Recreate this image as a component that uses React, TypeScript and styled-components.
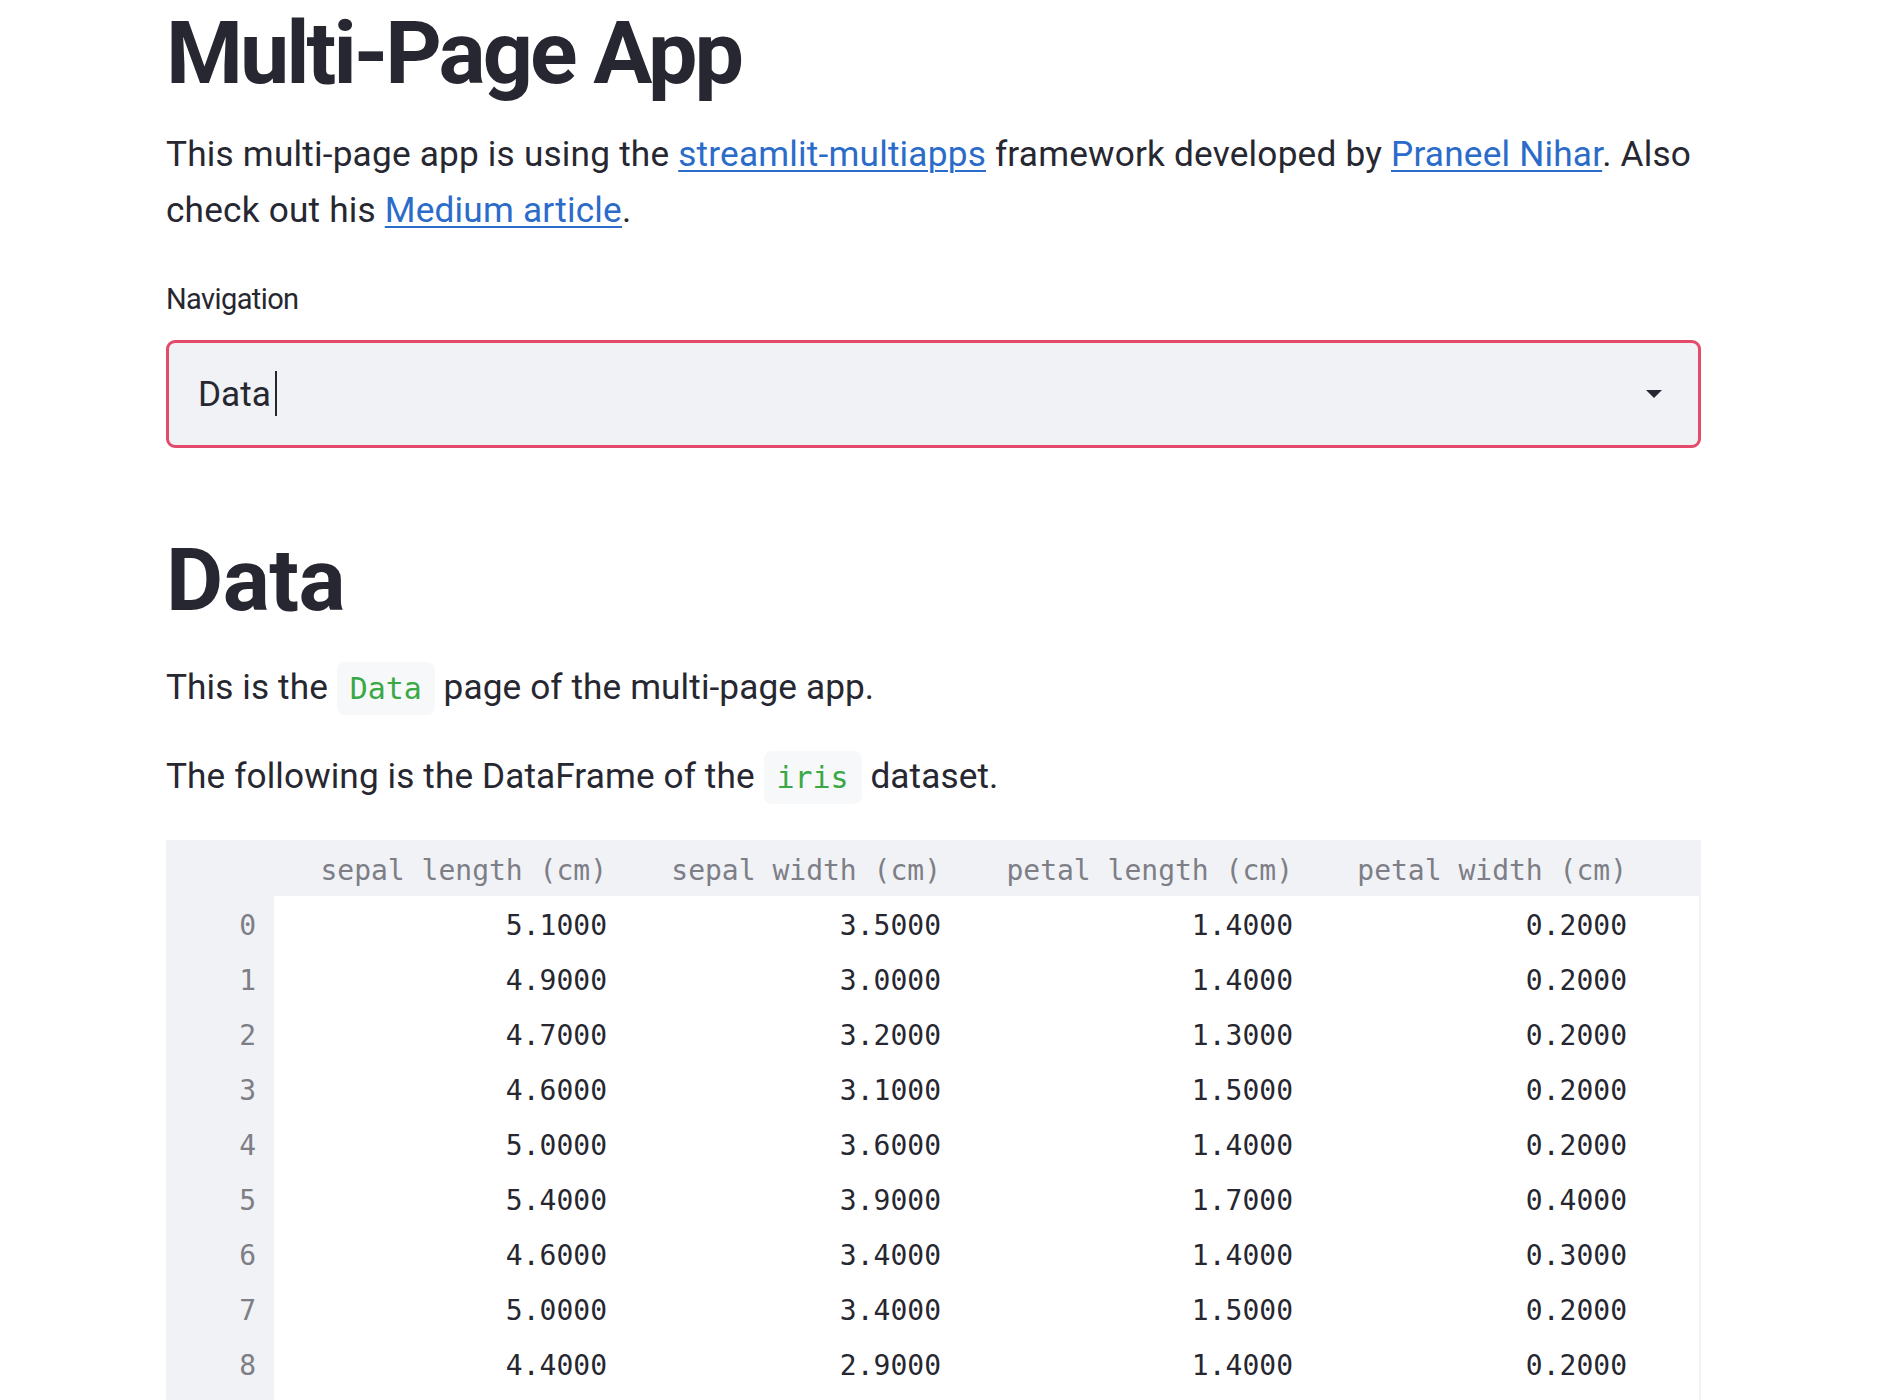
import styled, { createGlobalStyle } from 'styled-components';

const GlobalStyle = createGlobalStyle`
  html, body {
    margin: 0;
    padding: 0;
    background: #ffffff;
  }
  body {
    font-family: Roboto, "Noto Sans", sans-serif;
    color: #262730;
  }
`;

type Row = [number, number, number, number];

const columns = ['sepal length (cm)', 'sepal width (cm)', 'petal length (cm)', 'petal width (cm)'];

const iris: Row[] = [
  [5.1, 3.5, 1.4, 0.2],
  [4.9, 3.0, 1.4, 0.2],
  [4.7, 3.2, 1.3, 0.2],
  [4.6, 3.1, 1.5, 0.2],
  [5.0, 3.6, 1.4, 0.2],
  [5.4, 3.9, 1.7, 0.4],
  [4.6, 3.4, 1.4, 0.3],
  [5.0, 3.4, 1.5, 0.2],
  [4.4, 2.9, 1.4, 0.2],
  [4.9, 3.1, 1.5, 0.1],
];

export default function App() {
  return (
    <>
      <GlobalStyle />
      <AppView>
        <Main>
          <Title>Multi-Page App</Title>
          <Intro>
            This multi-page app is using the <Link href="#">streamlit-multiapps</Link> framework
            developed by <Link href="#">Praneel Nihar</Link>. Also check out his{' '}
            <Link href="#">Medium article</Link>.
          </Intro>

          <Label>Navigation</Label>
          <Select>
            <SelectValue>
              Data
              <Cursor />
            </SelectValue>
            <svg width="16" height="8" viewBox="0 0 16 8">
              <path d="M0 0 H16 L8 8 Z" fill="#262730" />
            </svg>
          </Select>

          <SectionTitle>Data</SectionTitle>
          <Text $gap={27}>
            This is the <Code>Data</Code> page of the multi-page app.
          </Text>
          <Text $gap={31}>
            The following is the DataFrame of the <Code>iris</Code> dataset.
          </Text>

          <Frame>
            <HeaderCell />
            {columns.map((c) => (
              <HeaderCell key={c}>{c}</HeaderCell>
            ))}
            <HeaderCell />
            {iris.map((row, i) => (
              <RowGroup key={i}>
                <IndexCell>{i}</IndexCell>
                {row.map((v, j) => (
                  <DataCell key={j}>{v.toFixed(4)}</DataCell>
                ))}
                <DataCell />
              </RowGroup>
            ))}
          </Frame>
        </Main>
      </AppView>
    </>
  );
}

const AppView = styled.div`
  height: 100vh;
  overflow: hidden;
`;

const Main = styled.main`
  box-sizing: border-box;
  width: 1535px;
  margin-left: 166px;
`;

const Title = styled.h1`
  margin: 0;
  font-size: 88px;
  font-weight: 700;
  line-height: 1.2;
  letter-spacing: -3px;
`;

const SectionTitle = styled(Title)`
  margin-top: 79px;
  letter-spacing: -0.5px;
`;

const Intro = styled.p`
  margin: 20px 0 0;
  font-size: 35.2px;
  line-height: 56px;
  letter-spacing: 0.2px;
`;

const Text = styled.p<{ $gap: number }>`
  margin: ${(p) => p.$gap}px 0 0;
  font-size: 35.2px;
  line-height: 56px;
  letter-spacing: 0.1px;
`;

const Link = styled.a`
  color: #2b6bc9;
  text-decoration: underline;
  text-decoration-thickness: 2px;
  text-underline-offset: 4px;
`;

const Code = styled.code`
  font-family: "DejaVu Sans Mono", "Liberation Mono", monospace;
  font-size: 0.85em;
  letter-spacing: 0;
  color: #3aa845;
  background: #f7f8fa;
  padding: 9px 13px;
  border-radius: 8px;
`;

const Label = styled.label`
  display: block;
  margin-top: 37px;
  font-size: 29px;
  line-height: 49px;
  letter-spacing: -0.6px;
`;

const Select = styled.div`
  box-sizing: border-box;
  margin-top: 16px;
  height: 108px;
  display: flex;
  align-items: center;
  justify-content: space-between;
  padding: 0 36px 0 29px;
  background: #f0f2f6;
  border: 3px solid #e44a69;
  border-radius: 9px;
`;

const SelectValue = styled.span`
  display: flex;
  align-items: center;
  font-size: 35.2px;
`;

const Cursor = styled.span`
  display: inline-block;
  width: 2px;
  height: 45px;
  margin-left: 4px;
  background: #262730;
`;

const Frame = styled.div`
  box-sizing: border-box;
  margin-top: 34px;
  padding-right: 2px;
  display: grid;
  grid-template-columns: 108px 351px 334px 352px 334px 1fr;
  background: #f0f2f6;
  font-family: "DejaVu Sans Mono", "Liberation Mono", monospace;
  font-size: 28px;
`;

const RowGroup = styled.div`
  display: contents;
`;

const HeaderCell = styled.div`
  box-sizing: border-box;
  height: 56px;
  display: flex;
  align-items: center;
  justify-content: flex-end;
  padding: 4px 18px 0 0;
  color: #7d7e86;
  white-space: nowrap;
`;

const IndexCell = styled.div`
  box-sizing: border-box;
  height: 55px;
  display: flex;
  align-items: center;
  justify-content: flex-end;
  padding: 3px 18px 0 0;
  color: #7d7e86;
`;

const DataCell = styled.div`
  box-sizing: border-box;
  height: 55px;
  display: flex;
  align-items: center;
  justify-content: flex-end;
  padding: 3px 18px 0 0;
  background: #ffffff;
  color: #262730;
`;
